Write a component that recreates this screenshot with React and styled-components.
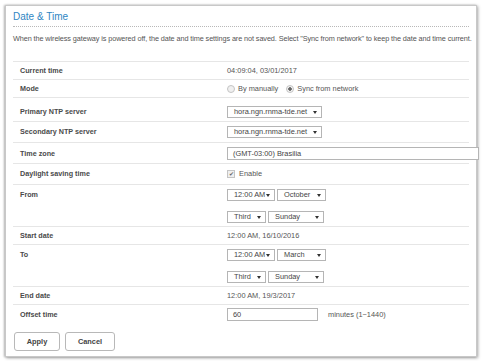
import React from 'react'
import styled, { createGlobalStyle } from 'styled-components'

const GlobalStyle = createGlobalStyle`
  body {
    margin: 0;
    background: #ffffff;
    font-family: "Liberation Sans", Arial, sans-serif;
  }
`

const Page = styled.div`
  padding: 5px 0 0 5px;
  width: 483px;
  height: 361px;
  box-sizing: border-box;
`

const Panel = styled.section`
  width: 472px;
  height: 352px;
  box-sizing: border-box;
  background: #fff;
  border: 1px solid #c8c8c8;
  box-shadow: 1px 1px 3px rgba(0, 0, 0, 0.35), -1px 0 2px rgba(0, 0, 0, 0.25);
  padding: 0 7px;
`

const Title = styled.h1`
  margin: 0;
  padding: 4px 0 3px 0;
  font-size: 10px;
  line-height: 13px;
  font-weight: normal;
  color: #2f86c3;
  border-bottom: 1px dotted #b8b8b8;
`

const Desc = styled.p`
  margin: 7px 0 17px 0;
  font-size: 7.3px;
  line-height: 10px;
  color: #555;
  white-space: nowrap;
  letter-spacing: -0.1px;
`

const Rows = styled.div`
  border-top: 1px solid #e6e6e6;
`

const Row = styled.div`
  display: grid;
  grid-template-columns: 207px 1fr;
  padding: ${(p) => p.$pad || '4px 0 3px 7px'};
  border-bottom: ${(p) => (p.$last ? 'none' : '1px solid #e6e6e6')};
  font-size: 7.4px;
  line-height: 10px;
`

const Label = styled.div`
  color: #4a4a4a;
  font-weight: bold;
  font-size: 7.2px;
  align-self: ${(p) => (p.$top ? 'start' : 'center')};
  padding-top: ${(p) => (p.$top ? '1px' : '0')};
`

const Value = styled.div`
  color: #555;
  display: flex;
  align-items: center;
  gap: ${(p) => p.$gap || '3px'};
  white-space: nowrap;
`

const Stack = styled.div`
  display: flex;
  flex-direction: column;
  gap: 10px;
`

const Line = styled.div`
  display: flex;
  gap: 2px;
`

const SelectBox = styled.div`
  width: ${(p) => p.$w}px;
  height: 12px;
  box-sizing: border-box;
  border: 1px solid #b5b5b5;
  background: #fff;
  display: flex;
  align-items: center;
  justify-content: space-between;
  padding: 0 4px 0 6px;
  font-size: 7.4px;
  color: #444;
  white-space: nowrap;
  &::after {
    content: '';
    flex-shrink: 0;
    border-left: 2px solid transparent;
    border-right: 2px solid transparent;
    border-top: 3px solid #333;
  }
`

const TextInput = styled.div`
  width: ${(p) => p.$w}px;
  height: 13px;
  box-sizing: border-box;
  border: 1px solid #b5b5b5;
  background: #fff;
  display: flex;
  align-items: center;
  padding: 0 5px;
  font-size: 7.4px;
  color: #444;
`

const Radio = styled.span`
  width: 6px;
  height: 6px;
  border-radius: 50%;
  border: 1px solid #c4c4c4;
  background: ${(p) => (p.$on ? 'radial-gradient(circle, #666 0 1.5px, #f2f2f2 2px)' : '#f0f0f0')};
  display: inline-block;
`

const RadioLabel = styled.span`
  margin-right: 5px;
`

const Check = styled.span`
  width: 6px;
  height: 6px;
  border: 1px solid #c4c4c4;
  background: #efefef;
  display: inline-flex;
  align-items: center;
  justify-content: center;
  font-size: 5.5px;
  color: #666;
  margin-right: 4px;
`

const Hint = styled.span`
  margin-left: 10px;
  color: #555;
`

const Buttons = styled.div`
  display: flex;
  gap: 5px;
  margin-top: 8px;
  padding-left: 1px;
`

const Button = styled.button`
  width: ${(p) => p.$w}px;
  height: 19px;
  border: 1px solid #b8b8b8;
  border-radius: 3px;
  background: #fff;
  font-family: "Liberation Sans", Arial, sans-serif;
  font-size: 7.4px;
  font-weight: bold;
  color: #444;
  padding: 0;
`

const App = () => (
  <>
    <GlobalStyle />
    <Page>
      <Panel>
        <Title>Date &amp; Time</Title>
        <Desc>
          When the wireless gateway is powered off, the date and time settings are not saved. Select "Sync from network" to keep the date and time current.
        </Desc>
        <Rows>
          <Row $pad="4px 0 3px 7px">
            <Label>Current time</Label>
            <Value>04:09:04, 03/01/2017</Value>
          </Row>
          <Row>
            <Label>Mode</Label>
            <Value>
              <Radio />
              <RadioLabel>By manually</RadioLabel>
              <Radio $on />
              <span>Sync from network</span>
            </Value>
          </Row>
          <Row $pad="8px 0 3px 7px">
            <Label>Primary NTP server</Label>
            <Value>
              <SelectBox $w={95}>hora.ngn.rnma-tde.net</SelectBox>
            </Value>
          </Row>
          <Row $pad="4px 0 4px 7px">
            <Label>Secondary NTP server</Label>
            <Value>
              <SelectBox $w={95}>hora.ngn.rnma-tde.net</SelectBox>
            </Value>
          </Row>
          <Row>
            <Label>Time zone</Label>
            <Value>
              <TextInput $w={252}>(GMT-03:00) Brasilia</TextInput>
            </Value>
          </Row>
          <Row $pad="5px 0 5px 7px">
            <Label>Daylight saving time</Label>
            <Value $gap="0">
              <Check>✔</Check>
              Enable
            </Value>
          </Row>
          <Row $pad="4px 0 3px 7px">
            <Label $top>From</Label>
            <Stack>
              <Line>
                <SelectBox $w={48}>12:00 AM</SelectBox>
                <SelectBox $w={49}>October</SelectBox>
              </Line>
              <Line>
                <SelectBox $w={39}>Third</SelectBox>
                <SelectBox $w={56}>Sunday</SelectBox>
              </Line>
            </Stack>
          </Row>
          <Row>
            <Label>Start date</Label>
            <Value>12:00 AM, 16/10/2016</Value>
          </Row>
          <Row $pad="4px 0 3px 7px">
            <Label $top>To</Label>
            <Stack>
              <Line>
                <SelectBox $w={48}>12:00 AM</SelectBox>
                <SelectBox $w={49}>March</SelectBox>
              </Line>
              <Line>
                <SelectBox $w={39}>Third</SelectBox>
                <SelectBox $w={56}>Sunday</SelectBox>
              </Line>
            </Stack>
          </Row>
          <Row>
            <Label>End date</Label>
            <Value>12:00 AM, 19/3/2017</Value>
          </Row>
          <Row $last $pad="3px 0 3px 7px">
            <Label>Offset time</Label>
            <Value $gap="0">
              <TextInput $w={91}>60</TextInput>
              <Hint>minutes (1~1440)</Hint>
            </Value>
          </Row>
        </Rows>
        <Buttons>
          <Button $w={46}>Apply</Button>
          <Button $w={50}>Cancel</Button>
        </Buttons>
      </Panel>
    </Page>
  </>
)

export default App
